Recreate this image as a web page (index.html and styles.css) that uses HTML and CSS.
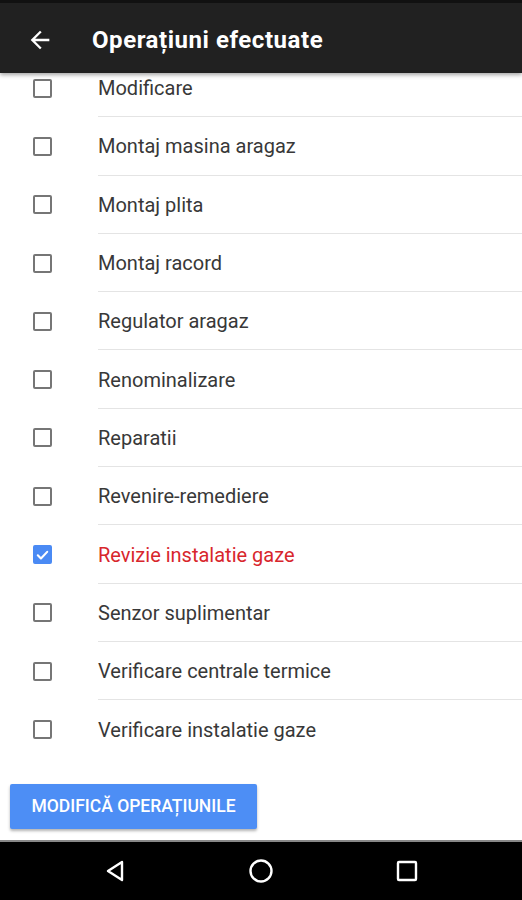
FILE: index.html
```html
<!DOCTYPE html>
<html lang="ro">
<head>
    <meta charset="UTF-8">
    <meta name="viewport" content="width=device-width, initial-scale=1.0">
    <title>Operațiuni efectuate</title>
    <link rel="stylesheet" href="styles.css">
</head>
<body>
    <div class="screen">
        <header class="appbar">
            <svg class="back" width="28" height="28" viewBox="0 0 24 24"><path d="M20 11H7.83l5.59-5.59L12 4l-8 8 8 8 1.41-1.41L7.83 13H20v-2z" fill="#fff"/></svg>
            <h1 class="title">Operațiuni efectuate</h1>
        </header>

        <div class="content">
            <ul class="list">
                <li class="row"><span class="box"></span><span class="label">Modificare</span></li>
                <li class="row"><span class="box"></span><span class="label">Montaj masina aragaz</span></li>
                <li class="row"><span class="box"></span><span class="label">Montaj plita</span></li>
                <li class="row"><span class="box"></span><span class="label">Montaj racord</span></li>
                <li class="row"><span class="box"></span><span class="label">Regulator aragaz</span></li>
                <li class="row"><span class="box"></span><span class="label">Renominalizare</span></li>
                <li class="row"><span class="box"></span><span class="label">Reparatii</span></li>
                <li class="row"><span class="box"></span><span class="label">Revenire-remediere</span></li>
                <li class="row checked">
                    <span class="box"><svg width="16" height="16" viewBox="0 0 24 24"><path d="M4.5 12.5 L9.5 17.5 L19.5 7" fill="none" stroke="#fff" stroke-width="3.4" stroke-linecap="round" stroke-linejoin="round"/></svg></span>
                    <span class="label">Revizie instalatie gaze</span>
                </li>
                <li class="row"><span class="box"></span><span class="label">Senzor suplimentar</span></li>
                <li class="row"><span class="box"></span><span class="label">Verificare centrale termice</span></li>
                <li class="row last"><span class="box"></span><span class="label">Verificare instalatie gaze</span></li>
            </ul>
            <div class="actions">
                <button class="btn" type="button">Modifică operațiunile</button>
            </div>
        </div>

        <nav class="navbar">
            <svg width="26" height="26" viewBox="0 0 26 26"><path d="M20 4 L6 13 L20 22 Z" fill="none" stroke="#fff" stroke-width="2.4" stroke-linejoin="round"/></svg>
            <svg width="26" height="26" viewBox="0 0 26 26"><circle cx="13" cy="13" r="10.5" fill="none" stroke="#fff" stroke-width="2.4"/></svg>
            <svg width="26" height="26" viewBox="0 0 26 26"><rect x="4" y="4" width="18" height="18" rx="1" fill="none" stroke="#fff" stroke-width="2.4"/></svg>
        </nav>
    </div>
</body>
</html>
```

FILE: styles.css
```css
body {
    margin: 0;
    font-family: Roboto, "Noto Sans", Arial, sans-serif;
    background: #fff;
}
.screen {
    width: 522px;
    height: 900px;
    display: flex;
    flex-direction: column;
    overflow: hidden;
}
.appbar {
    position: relative;
    z-index: 2;
    height: 73px;
    border-top: 3px solid #111;
    padding-top: 3px;
    padding-left: 26px;
    box-sizing: border-box;
    background: #212121;
    display: flex;
    align-items: center;
    box-shadow: 0 2px 4px rgba(0, 0, 0, 0.35);
    flex-shrink: 0;
}
.back {
    margin-right: 38px;
}
.title {
    margin: 0;
    color: #fff;
    font-size: 24px;
    font-weight: 700;
    letter-spacing: 0.55px;
}
.content {
    flex: 1;
    display: flex;
    flex-direction: column;
    margin-top: -14px; /* list is scrolled a bit under the bar */
}
.list {
    list-style: none;
    margin: 0;
    padding: 0;
}
.row {
    height: 58.3px;
    display: flex;
    align-items: center;
    box-sizing: border-box;
}
.box {
    width: 19px;
    height: 19px;
    box-sizing: border-box;
    border: 2px solid #767676;
    border-radius: 2px;
    margin-left: 33px;
    margin-right: 46px;
    display: flex;
    align-items: center;
    justify-content: center;
    flex-shrink: 0;
}
.label {
    flex: 1;
    height: 100%;
    display: flex;
    align-items: center;
    font-size: 20px;
    color: #383838;
    border-bottom: 1px solid #e4e4e4;
    box-sizing: border-box;
    padding-top: 1px;
}
.last .label {
    border-bottom: none;
}
.checked .box {
    background: #4a8af4;
    border-color: #4a8af4;
}
.checked .label {
    color: #d8262c;
}
.actions {
    padding: 25px 10px 0;
}
.btn {
    width: 247px;
    height: 45px;
    background: #4d8ef5;
    color: #fff;
    border: none;
    border-radius: 2px;
    font-family: Roboto, Arial, sans-serif;
    font-size: 17.5px;
    font-weight: 500;
    text-transform: uppercase;
    box-shadow: 0 2px 3px rgba(0, 0, 0, 0.3);
}
.navbar {
    height: 58px;
    border-top: 2px solid #888;
    background: #000;
    display: flex;
    align-items: center;
    justify-content: center;
    gap: 120px;
    flex-shrink: 0;
}
```
